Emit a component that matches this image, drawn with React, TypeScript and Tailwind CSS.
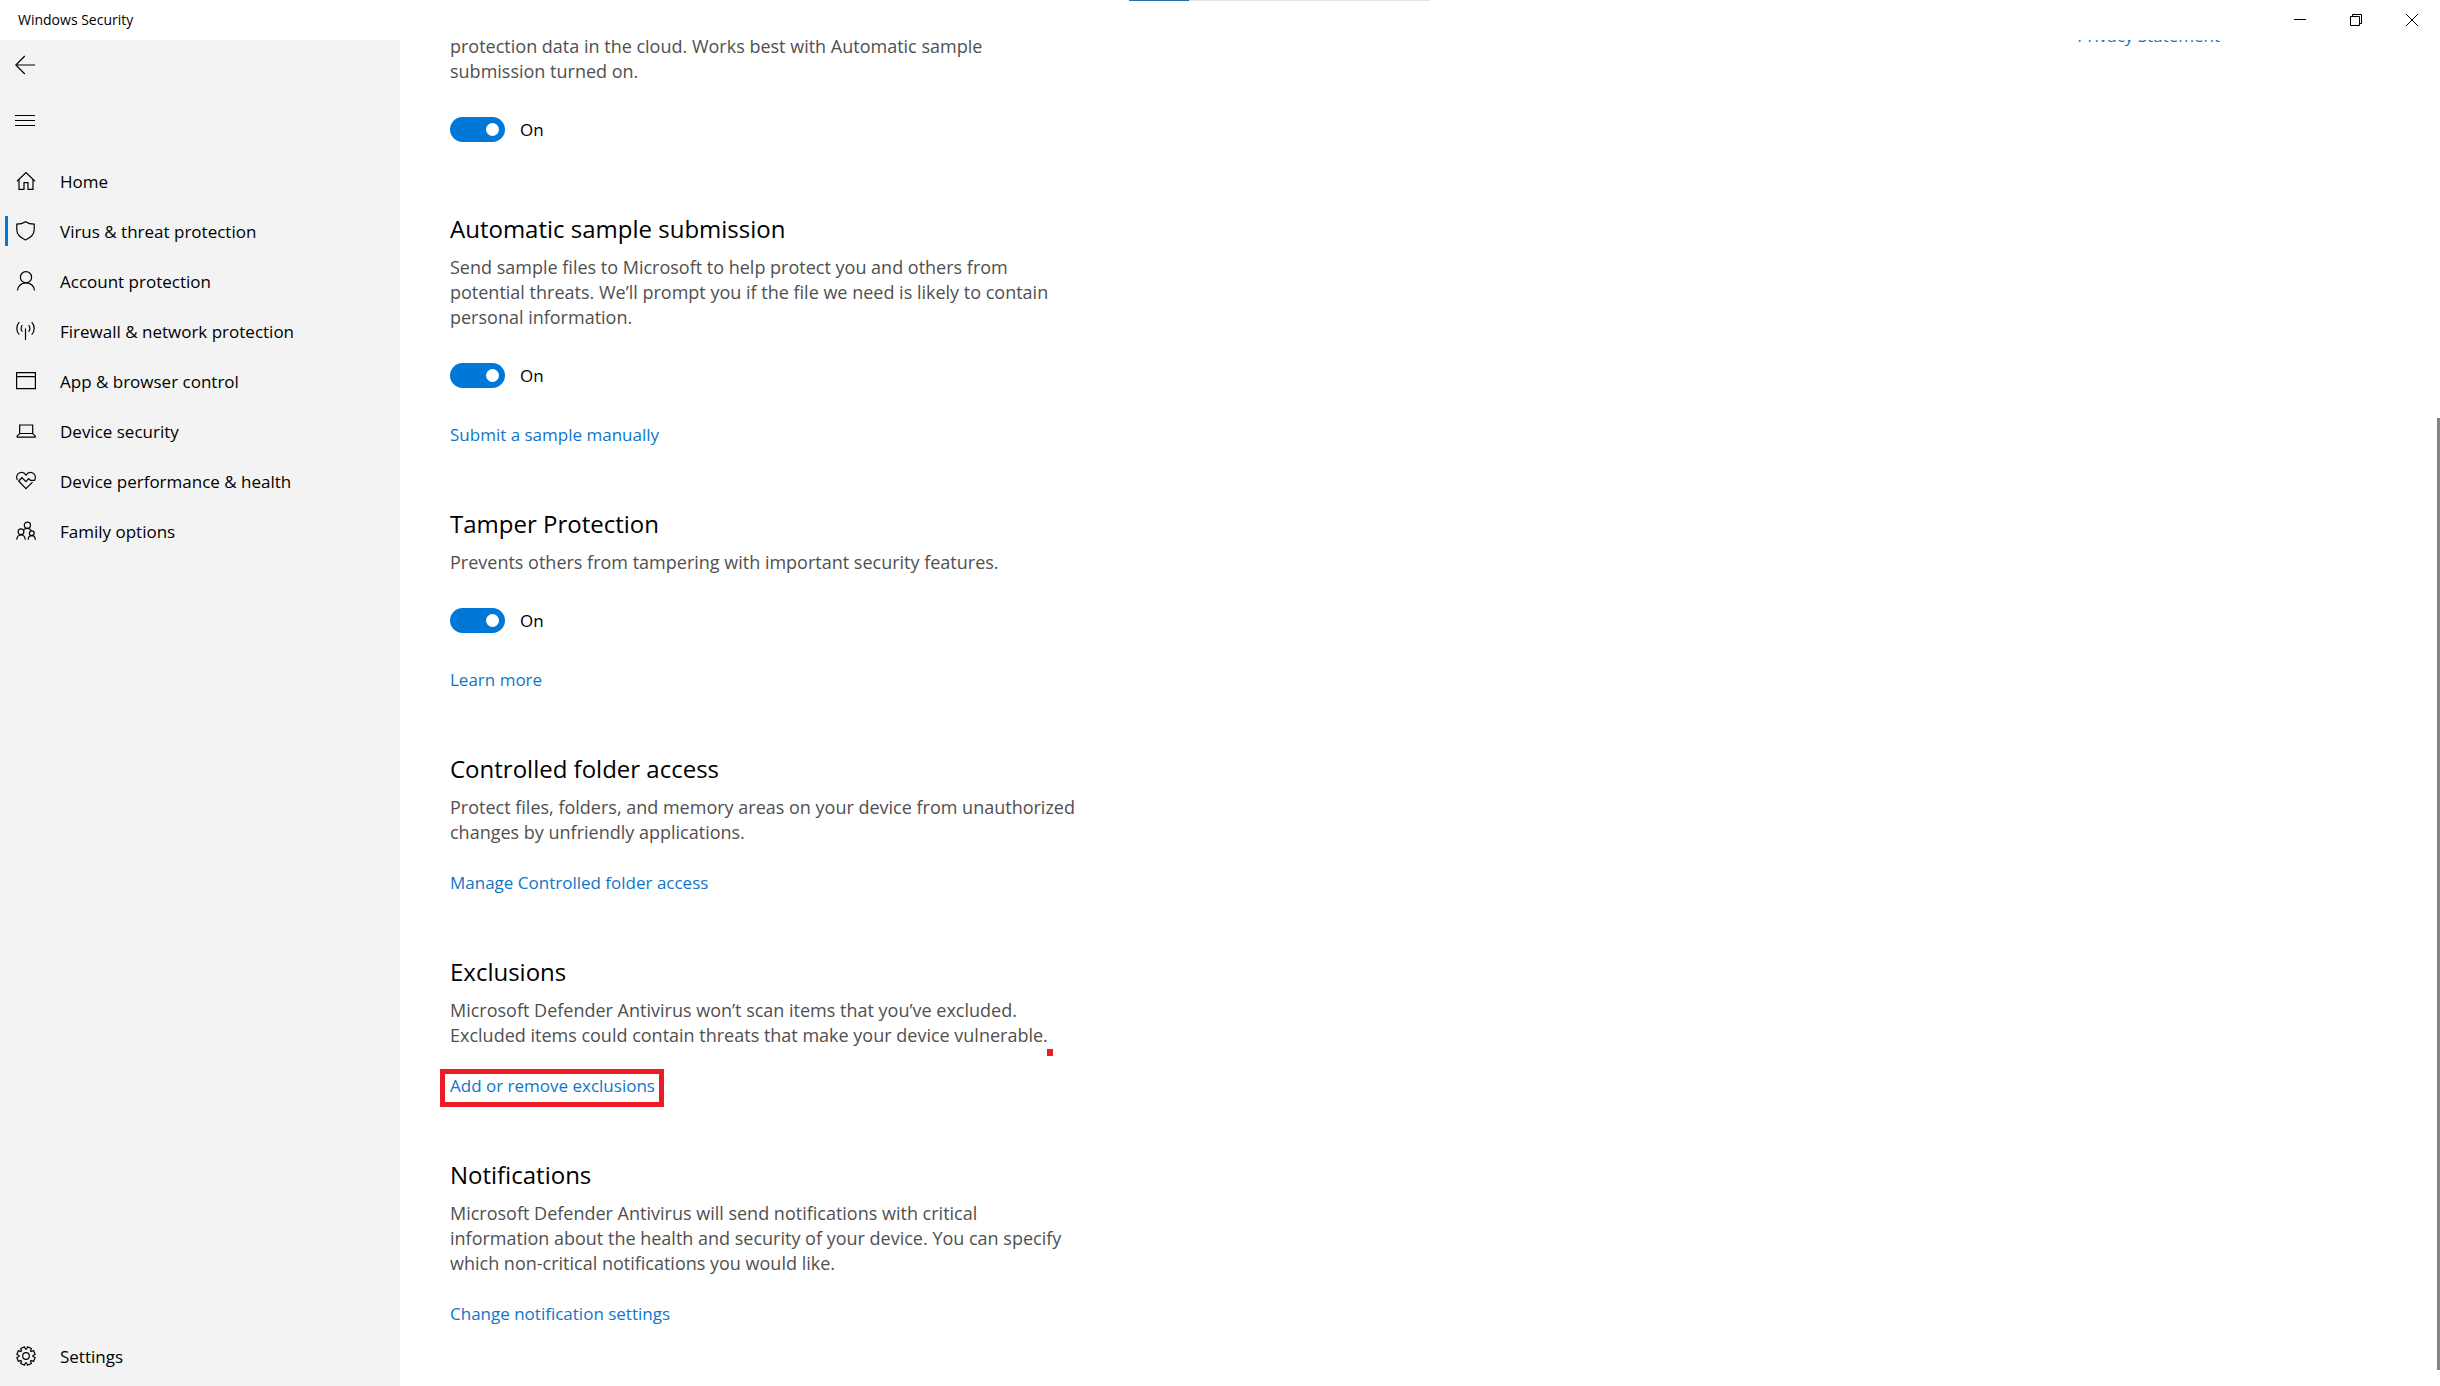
import React from 'react';

const Icon = ({ children }: { children: React.ReactNode }) => (
    <svg
        className="h-5 w-5 shrink-0"
        viewBox="0 0 20 20"
        fill="none"
        stroke="currentColor"
        strokeWidth="1.2"
        aria-hidden="true"
    >
        {children}
    </svg>
);

const HomeIcon = () => (
    <Icon>
        <path d="M1 10.2 10 1.6l9 8.6" />
        <path d="M3 8.5v9.8h5v-6.6h4v6.6h5V8.5" />
    </Icon>
);

const ShieldIcon = () => (
    <Icon>
        <path d="M9.5.7C7 2.400 4 3.200.8 3.200v5.600c0 4.600 3.300 7.900 8.700 10.200 5.400-2.300 8.700-5.600 8.700-10.200V3.200C15 3.200 12 2.400 9.500.7z" />
    </Icon>
);

const PersonIcon = () => (
    <Icon>
        <circle cx="10" cy="6.200" r="5.600" />
        <path d="M1.500 19.500c.3-4.500 3.800-7.700 8.500-7.700s8.200 3.200 8.500 7.700" />
    </Icon>
);

const AntennaIcon = () => (
    <Icon>
        <path d="M9.500 7.500V19" />
        <path d="M6.400 4.200c-1.700 1.700-1.700 4.700 0 6.400M12.600 4.200c1.700 1.700 1.700 4.700 0 6.400" />
        <path d="M3.300 1.200c-3.300 3.400-3.300 9 0 12.400M15.700 1.200c3.300 3.400 3.300 9 0 12.400" />
    </Icon>
);

const WindowIcon = () => (
    <Icon>
        <path d="M.6 1.600h18.800v16H.6zM.6 5.600h18.800" />
    </Icon>
);

const LaptopIcon = () => (
    <Icon>
        <path d="M3.700 12.500V4h13v8.500" />
        <path d="M3.700 12.500h13l2.500 2.400v1.200H1.200v-1.200z" />
    </Icon>
);

const HeartIcon = () => (
    <Icon>
        <path d="M1.400 9C-.2 6 1 2.700 3.700 1.700 6.300.800 8.600 1.900 10 4.100c1.400-2.200 3.700-3.300 6.300-2.400C19 2.700 20.200 6 18.600 9.400H14.500L12.700 7.600 9.900 10.600 6 6.700 2.600 10" />
        <path d="M2.600 10 10 17.700l6.500-6.600" />
    </Icon>
);

const FamilyIcon = () => (
    <Icon>
        <circle cx="11.400" cy="4.200" r="3.100" />
        <circle cx="5" cy="10.800" r="2.900" />
        <circle cx="15.800" cy="12.200" r="2.400" />
        <path d="M.7 18.700c.2-2.700 2-4.900 4.300-4.900s4.100 2.200 4.300 4.900" />
        <path d="M12.200 18.700c.1-2.300 1.600-4 3.600-4s3.400 1.700 3.500 4" />
        <path d="M7.600 9c.8-1.100 2.200-1.700 3.800-1.700 1.700 0 3.100.8 3.900 2.300" />
    </Icon>
);

// eight teeth, with a notch between each pair
const gearPoints = Array.from({ length: 8 }, (_, i) =>
    [
        [-18, 6.9],
        [-13, 9.3],
        [13, 9.3],
        [18, 6.9],
    ].map(([offset, radius]) => {
        const a = ((i * 45 + 22.5 + offset) * Math.PI) / 180;
        return `${(10 + radius * Math.sin(a)).toFixed(2)},${(10 - radius * Math.cos(a)).toFixed(2)}`;
    }).join(' ')
).join(' ');

const GearIcon = () => (
    <Icon>
        <circle cx="10" cy="10" r="3.300" />
        <polygon points={gearPoints} strokeLinejoin="round" />
    </Icon>
);

const NAV = [
    { label: 'Home', icon: HomeIcon },
    { label: 'Virus & threat protection', icon: ShieldIcon, active: true },
    { label: 'Account protection', icon: PersonIcon },
    { label: 'Firewall & network protection', icon: AntennaIcon },
    { label: 'App & browser control', icon: WindowIcon },
    { label: 'Device security', icon: LaptopIcon },
    { label: 'Device performance & health', icon: HeartIcon },
    { label: 'Family options', icon: FamilyIcon },
];

const NavItem = ({ label, icon: IconComp, active }: any) => (
    <a href="#" aria-current={active ? 'page' : undefined} className="flex h-[50px] items-center pl-[5px] hover:bg-black/5">
        <span className={`mr-2 h-[30px] w-[3px] ${active ? 'bg-[#0078d7]' : ''}`} />
        <IconComp />
        <span className="ml-6 text-[17px] leading-[25px]">{label}</span>
    </a>
);

const TitleBar = () => (
    <header className="relative flex h-10 shrink-0 items-center justify-between bg-white">
        <h1 className="pl-[18px] text-[14px] leading-5">Windows Security</h1>
        <div className="flex h-full">
            <button type="button" aria-label="Minimize" className="flex w-14 items-center justify-center">
                <svg className="h-3 w-3" viewBox="0 0 12 12" stroke="currentColor" aria-hidden="true">
                    <path d="M0 5.500h12" />
                </svg>
            </button>
            <button type="button" aria-label="Restore" className="flex w-14 items-center justify-center">
                <svg className="h-3 w-3" viewBox="0 0 12 12" fill="none" stroke="currentColor" aria-hidden="true">
                    <path d="M.5 2.500h9v9h-9zM2.500 2.500v-2h9v9h-2" />
                </svg>
            </button>
            <button type="button" aria-label="Close" className="flex w-14 items-center justify-center">
                <svg className="h-3 w-3" viewBox="0 0 12 12" stroke="currentColor" aria-hidden="true">
                    <path d="M0 0l12 12M12 0 0 12" />
                </svg>
            </button>
        </div>
        {/* thin progress strip along the top edge */}
        <div className="absolute top-0 left-[1129px] flex h-px w-[301px] bg-[#e5e5e5]">
            <div className="w-[60px] bg-[#2f6ca5]" />
        </div>
    </header>
);

const Sidebar = () => (
    <aside className="flex w-[400px] shrink-0 flex-col bg-[#f3f3f3] pb-[5px]">
        <button type="button" aria-label="Back" className="flex h-[50px] w-[50px] items-center justify-center">
            <Icon>
                <path d="M20 10H.8M9.800 1 .8 10l9 9" />
            </Icon>
        </button>
        <button type="button" aria-label="Menu" className="mt-[5px] mb-[11px] flex h-[50px] w-[50px] items-center justify-center">
            <svg className="h-5 w-5" viewBox="0 0 20 20" stroke="currentColor" aria-hidden="true">
                <path d="M0 5.500h20M0 10.500h20M0 15.500h20" />
            </svg>
        </button>
        <nav className="flex flex-1 flex-col">
            {NAV.map((item) => (
                <NavItem key={item.label} {...item} />
            ))}
            <div className="mt-auto">
                <NavItem label="Settings" icon={GearIcon} />
            </div>
        </nav>
    </aside>
);

const Toggle = ({ label }: { label: string }) => (
    <label className="mt-[33px] flex h-[25px] w-fit items-center gap-[15px]">
        <span className="relative flex">
            <input
                type="checkbox"
                role="switch"
                aria-label={label}
                defaultChecked
                className="peer h-[25px] w-[55px] appearance-none rounded-full border-2 border-[#333] checked:border-[#0078d7] checked:bg-[#0078d7]"
            />
            <span className="pointer-events-none absolute top-[6px] left-[6px] h-[13px] w-[13px] rounded-full bg-[#333] peer-checked:left-[36px] peer-checked:bg-white" />
        </span>
        <span className="text-[17px] leading-[25px]">On</span>
    </label>
);

const Section = ({ title, lines, children }: { title?: string; lines: string[]; children?: React.ReactNode }) => (
    <section className="flex flex-col items-start">
        {title && <h2 className="mb-[10px] text-[24px] leading-8">{title}</h2>}
        <p className="text-[18px] leading-[25px] text-[#505050]">
            {lines.map((line) => (
                <span key={line} className="block whitespace-nowrap">{line}</span>
            ))}
        </p>
        {children}
    </section>
);

const TextLink = ({ children, className = 'mt-[25px]' }: { children: React.ReactNode; className?: string }) => (
    <a href="#" className={`text-[17px] leading-[25px] text-[#0f75c9] hover:text-[#666] ${className}`}>
        {children}
    </a>
);

const App = () => (
    <div className="flex h-screen flex-col overflow-hidden bg-white font-['Segoe_UI','Open_Sans','Noto_Sans',sans-serif] text-black">
        <TitleBar />
        <div className="flex min-h-0 flex-1">
            <Sidebar />
            <main className="flex min-w-0 flex-1 justify-between overflow-hidden">
                {/* scrolled part way down, so the first lines sit under the title bar */}
                <div className="-mt-[6px] ml-[50px] flex flex-col gap-[61px]">
                    <div className="pb-[10px]">
                        <Section
                            lines={[
                                'protection data in the cloud. Works best with Automatic sample',
                                'submission turned on.',
                            ]}
                        >
                            <Toggle label="Cloud-delivered protection" />
                        </Section>
                    </div>
                    <Section
                        title="Automatic sample submission"
                        lines={[
                            'Send sample files to Microsoft to help protect you and others from',
                            'potential threats. We’ll prompt you if the file we need is likely to contain',
                            'personal information.',
                        ]}
                    >
                        <Toggle label="Automatic sample submission" />
                        <TextLink className="mt-[34px]">Submit a sample manually</TextLink>
                    </Section>
                    <Section
                        title="Tamper Protection"
                        lines={['Prevents others from tampering with important security features.']}
                    >
                        <Toggle label="Tamper Protection" />
                        <TextLink className="mt-[34px]">Learn more</TextLink>
                    </Section>
                    <Section
                        title="Controlled folder access"
                        lines={[
                            'Protect files, folders, and memory areas on your device from unauthorized',
                            'changes by unfriendly applications.',
                        ]}
                    >
                        <TextLink>Manage Controlled folder access</TextLink>
                    </Section>
                    <div className="relative">
                        <Section
                            title="Exclusions"
                            lines={[
                                'Microsoft Defender Antivirus won’t scan items that you’ve excluded.',
                                'Excluded items could contain threats that make your device vulnerable.',
                            ]}
                        >
                            <TextLink>Add or remove exclusions</TextLink>
                        </Section>
                        {/* red marker annotations */}
                        <div className="pointer-events-none absolute -bottom-[9px] -left-[10px] h-[38px] w-[224px] border-[5px] border-[#ec1c24]" />
                        <div className="pointer-events-none absolute bottom-[42px] left-[597px] h-[7px] w-[6px] bg-[#ec1c24]" />
                    </div>
                    <Section
                        title="Notifications"
                        lines={[
                            'Microsoft Defender Antivirus will send notifications with critical',
                            'information about the health and security of your device. You can specify',
                            'which non-critical notifications you would like.',
                        ]}
                    >
                        <TextLink>Change notification settings</TextLink>
                    </Section>
                </div>
                <div className="flex">
                    <TextLink className="-mt-[17px] mr-[217px]">Privacy Statement</TextLink>
                    <div className="mt-[378px] mb-4 w-[3px] bg-[#858585]" />
                </div>
            </main>
        </div>
    </div>
);

export default App;
